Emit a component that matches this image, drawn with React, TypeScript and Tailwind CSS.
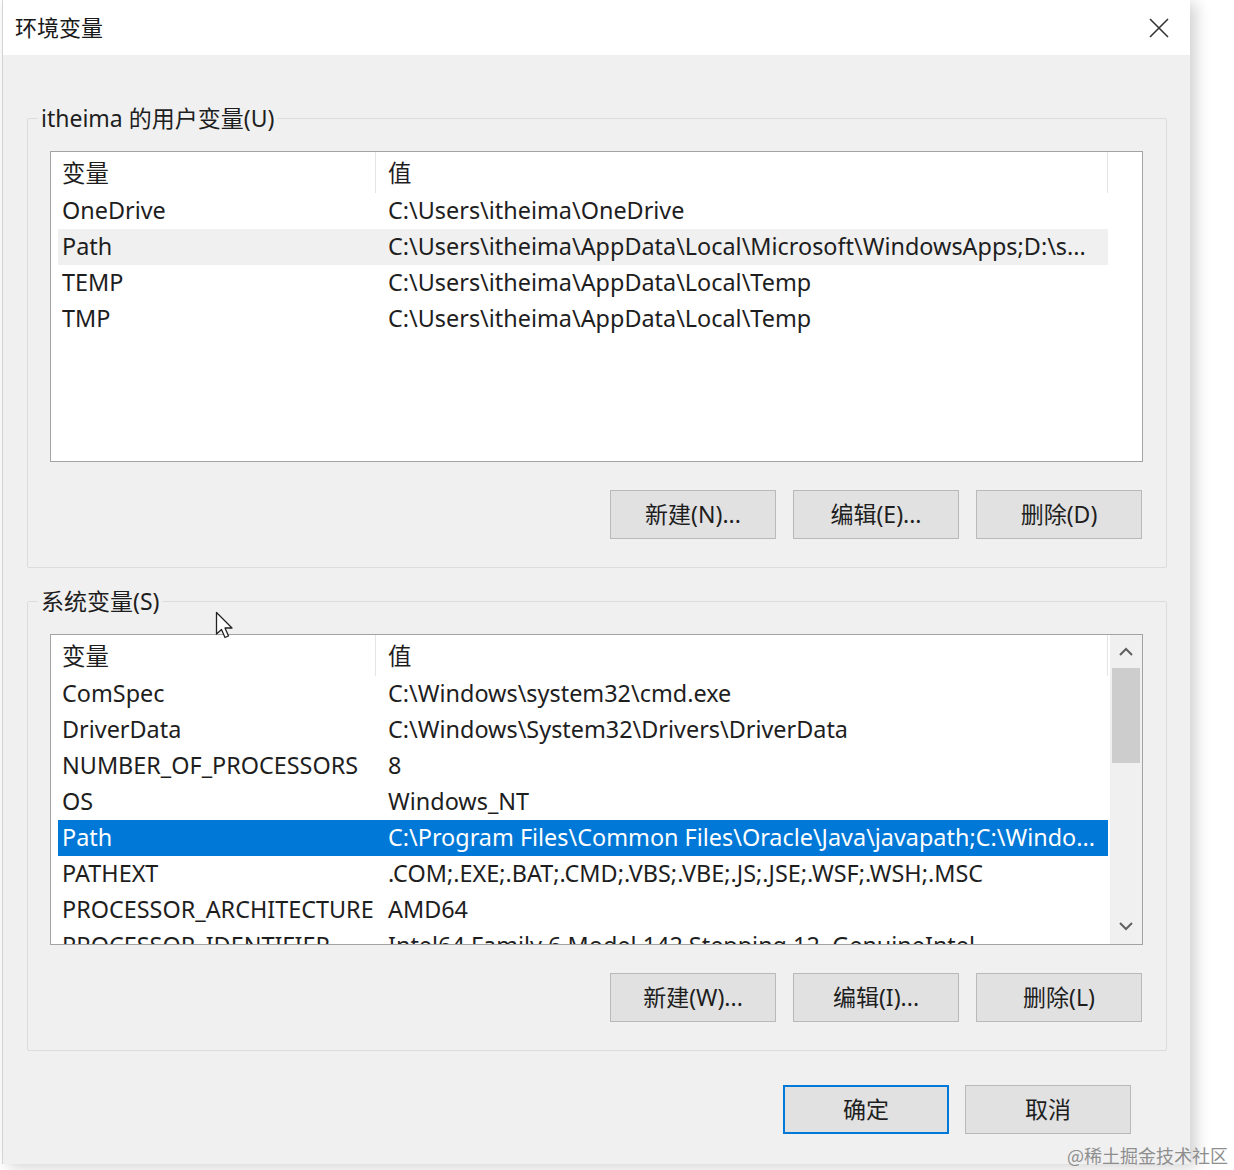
import React from "react";

const userVars: [string, string][] = [
  ["OneDrive", "C:\\Users\\itheima\\OneDrive"],
  ["Path", "C:\\Users\\itheima\\AppData\\Local\\Microsoft\\WindowsApps;D:\\s..."],
  ["TEMP", "C:\\Users\\itheima\\AppData\\Local\\Temp"],
  ["TMP", "C:\\Users\\itheima\\AppData\\Local\\Temp"],
];

const sysVars: [string, string][] = [
  ["ComSpec", "C:\\Windows\\system32\\cmd.exe"],
  ["DriverData", "C:\\Windows\\System32\\Drivers\\DriverData"],
  ["NUMBER_OF_PROCESSORS", "8"],
  ["OS", "Windows_NT"],
  ["Path", "C:\\Program Files\\Common Files\\Oracle\\Java\\javapath;C:\\Windo..."],
  ["PATHEXT", ".COM;.EXE;.BAT;.CMD;.VBS;.VBE;.JS;.JSE;.WSF;.WSH;.MSC"],
  ["PROCESSOR_ARCHITECTURE", "AMD64"],
  ["PROCESSOR_IDENTIFIER", "Intel64 Family 6 Model 142 Stepping 12, GenuineIntel"],
];

function Row({
  name,
  value,
  state,
}: {
  name: string;
  value: string;
  state: "none" | "hover" | "selected";
}) {
  const bg =
    state === "selected"
      ? "bg-[#0078d7] text-white"
      : state === "hover"
      ? "bg-[#f0f0f0] text-[#1e1e1e]"
      : "text-[#1e1e1e]";
  return (
    <div className={`flex h-[36px] w-[1050px] shrink-0 items-center ${bg}`}>
      <div className="w-[318px] shrink-0 whitespace-nowrap pl-[4px]">{name}</div>
      <div className="whitespace-nowrap pl-[12px]">{value}</div>
    </div>
  );
}

function Header() {
  return (
    <div className="flex h-[41px] w-[1050px] shrink-0 text-[#1e1e1e]">
      <div className="flex w-[318px] shrink-0 items-center border-r border-[#e5e5e5] pl-[4px] pt-[3px]">
        变量
      </div>
      <div className="flex flex-1 items-center border-r border-[#e5e5e5] pl-[12px] pt-[3px]">
        值
      </div>
    </div>
  );
}

function Chevron({ up }: { up?: boolean }) {
  return (
    <svg width="16" height="10" viewBox="0 0 16 10">
      <path
        d={up ? "M2 8 L8 2 L14 8" : "M2 2 L8 8 L14 2"}
        fill="none"
        stroke="#606060"
        strokeWidth="2"
      />
    </svg>
  );
}

function VarList({
  rows,
  hoverIdx,
  selectedIdx,
  scroll,
}: {
  rows: [string, string][];
  hoverIdx?: number;
  selectedIdx?: number;
  scroll?: boolean;
}) {
  return (
    <div className="flex h-[311px] w-[1093px] overflow-hidden border border-[#a3a3a3] bg-white text-[23.4px]">
      <div className="flex flex-1 flex-col overflow-hidden pl-[7px]">
        <Header />
        {rows.map(([n, v], i) => (
          <Row
            key={n + i}
            name={n}
            value={v}
            state={i === selectedIdx ? "selected" : i === hoverIdx ? "hover" : "none"}
          />
        ))}
      </div>
      {scroll && (
        <div className="flex w-[32px] shrink-0 flex-col bg-[#f0f0f0]">
          <div className="flex h-[33px] items-center justify-center">
            <Chevron up />
          </div>
          <div className="mx-[2px] h-[95px] bg-[#cdcdcd]" />
          <div className="flex-1" />
          <div className="flex h-[36px] items-center justify-center">
            <Chevron />
          </div>
        </div>
      )}
    </div>
  );
}

function Btn({ children, primary }: { children: React.ReactNode; primary?: boolean }) {
  return (
    <div
      className={`flex h-[49px] w-[166px] items-center justify-center bg-[#e1e1e1] text-[#1e1e1e] ${
        primary ? "border-2 border-[#0078d7]" : "border border-[#b9b9b9]"
      }`}
    >
      {children}
    </div>
  );
}

function Group({
  label,
  children,
  buttons,
}: {
  label: string;
  children: React.ReactNode;
  buttons: string[];
}) {
  return (
    <fieldset className="w-[1140px] rounded-[2px] border border-[#dcdcdc] px-[22px] pb-[28px] pt-[19px]">
      <legend className="-ml-[12px] px-[3px] text-[23px] leading-[28px] text-[#1e1e1e]">
        {label}
      </legend>
      {children}
      <div className="mt-[28px] flex w-[1093px] justify-end gap-[17px] pr-[1px]">
        {buttons.map((b) => (
          <Btn key={b}>{b}</Btn>
        ))}
      </div>
    </fieldset>
  );
}

export default function App() {
  return (
    <div className="relative h-[1170px] w-[1234px] overflow-hidden bg-white font-[family-name:'Noto_Sans','Noto_Sans_CJK_SC',sans-serif] text-[23px]">
      <div className="ml-[2px] flex h-[1164px] w-[1188px] flex-col border-l border-[#d4d4d4] bg-[#f0f0f0] shadow-[6px_3px_14px_rgba(0,0,0,0.18)]">
        {/* Title bar */}
        <div className="flex h-[55px] shrink-0 items-center justify-between bg-white pl-[12px] pr-[20px]">
          <span className="text-[22px] text-[#1a1a1a]">环境变量</span>
          <svg width="22" height="22" viewBox="0 0 22 22">
            <path d="M2 2 L20 20 M20 2 L2 20" stroke="#333" strokeWidth="1.6" fill="none" />
          </svg>
        </div>

        {/* Body */}
        <div className="flex flex-col px-[24px] pt-[49px]">
          <Group label="itheima 的用户变量(U)" buttons={["新建(N)...", "编辑(E)...", "删除(D)"]}>
            <VarList rows={userVars} hoverIdx={1} />
          </Group>
          <div className="h-[19px]" />
          <Group label="系统变量(S)" buttons={["新建(W)...", "编辑(I)...", "删除(L)"]}>
            <VarList rows={sysVars} selectedIdx={4} scroll />
          </Group>

          <div className="mt-[34px] flex justify-end gap-[16px] pr-[35px]">
            <Btn primary>确定</Btn>
            <Btn>取消</Btn>
          </div>
        </div>
      </div>

      {/* Mouse cursor */}
      <svg
        className="absolute left-[215px] top-[611px]"
        width="20"
        height="30"
        viewBox="0 0 20 30"
      >
        <path
          d="M1.5 1.5 L1.5 23 L6.5 18.5 L10 26.5 L13.5 25 L10 17 L17 17 Z"
          fill="white"
          stroke="#222"
          strokeWidth="1.3"
          strokeLinejoin="round"
        />
      </svg>

      {/* Watermark */}
      <div className="absolute bottom-[3px] right-[6px] font-[family-name:'Noto_Sans_CJK_SC',sans-serif] text-[18px] leading-[24px] text-[#8e8e8e]">
        @稀土掘金技术社区
      </div>
    </div>
  );
}
